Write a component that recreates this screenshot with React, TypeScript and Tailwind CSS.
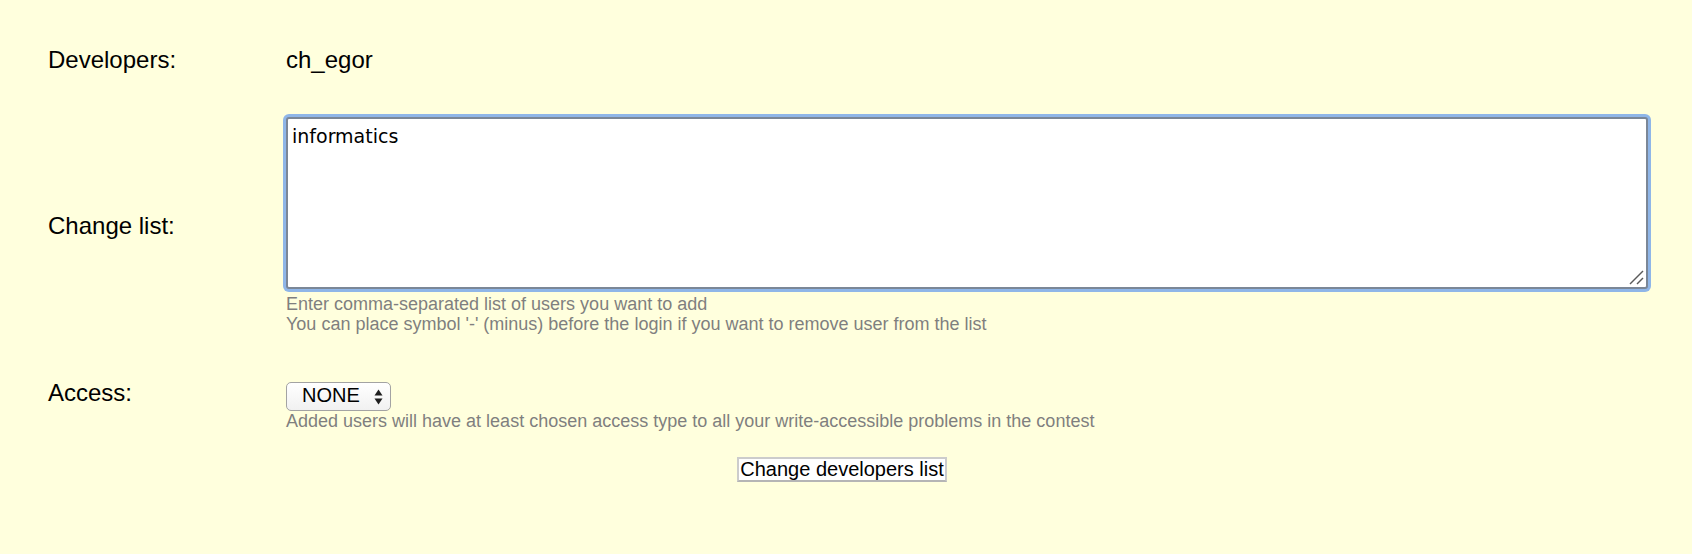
import React from "react";

/* ─── Up/down arrows of the Mac select ─── */
function SelectArrows() {
  return (
    <svg width="9" height="16" viewBox="0 0 9 16" aria-hidden="true">
      <path d="M4.5 0.5L8.5 6.5H0.5Z" fill="#1e1e1e" />
      <path d="M0.5 9.5H8.5L4.5 15.5Z" fill="#1e1e1e" />
    </svg>
  );
}

/* ─── Textarea resize grip ─── */
function ResizeGrip() {
  return (
    <svg
      className="pointer-events-none absolute bottom-[4px] right-[4px]"
      width="15"
      height="15"
      viewBox="0 0 15 15"
      aria-hidden="true"
    >
      <path d="M1 14L14 1" stroke="#5a5a5a" strokeWidth="1.5" />
      <path d="M8 14L14 8" stroke="#5a5a5a" strokeWidth="1.5" />
    </svg>
  );
}

const arial = "font-['Liberation_Sans',Arial,sans-serif]";

export default function App() {
  return (
    <div className={`min-h-screen w-full bg-[#ffffdd] ${arial} text-black`}>
      <div className="pl-[48px] pt-[46px]">
        {/* Developers */}
        <div className="flex items-start">
          <div className="w-[238px] shrink-0 text-[24px] leading-[28px]">Developers:</div>
          <div className="text-[24px] leading-[28px]">ch_egor</div>
        </div>

        {/* Change list */}
        <div className="mt-[43px] flex items-center">
          <div className="w-[238px] shrink-0 text-[24px] leading-[28px]">Change list:</div>
          <div className="flex flex-col">
            <div className="relative">
              <textarea
                defaultValue="informatics"
                className="block h-[172px] w-[1362px] resize-none rounded-[3px] border-2 border-[#7b8797] bg-white px-[4px] pt-[6px] font-['DejaVu_Sans',Verdana,sans-serif] text-[19px] leading-[22px] text-black shadow-[0_0_0_3px_#8fb6e8] outline-none"
              />
              <ResizeGrip />
            </div>
            <div className="mt-[5px] text-[18px] leading-[20px] text-[#7f7f7f]">
              <div>Enter comma-separated list of users you want to add</div>
              <div>You can place symbol '-' (minus) before the login if you want to remove user from the list</div>
            </div>
          </div>
        </div>

        {/* Access */}
        <div className="mt-[45px] flex items-start">
          <div className="w-[238px] shrink-0 text-[24px] leading-[28px]">Access:</div>
          <div className="flex flex-col">
            <div className="mt-[3px] flex h-[29px] w-[105px] items-center rounded-[5px] border border-[#a3a3a3] bg-gradient-to-b from-white to-[#f1f1f1] pb-[3px] pl-[15px]">
              <span className="text-[20px] leading-[22px]">NONE</span>
              <span className="ml-[14px] mt-[3px] flex">
                <SelectArrows />
              </span>
            </div>
            <div className="text-[18px] leading-[20px] text-[#7f7f7f]">
              Added users will have at least chosen access type to all your write-accessible problems in the contest
            </div>
          </div>
        </div>
      </div>

      {/* Submit */}
      <div className="mt-[26px] flex justify-center pr-[8px]">
        <button className="border-2 border-[#cccccc] border-b-[#b5b5b5] bg-white px-[1px] text-[20px] leading-[21px] text-black">
          Change developers list
        </button>
      </div>
    </div>
  );
}
